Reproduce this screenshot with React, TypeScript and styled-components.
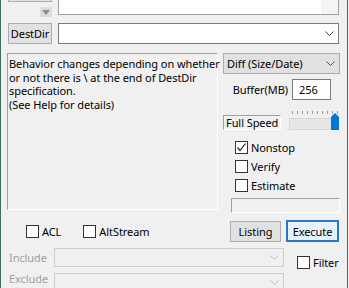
import React from "react";
import styled, { createGlobalStyle } from "styled-components";

const Global = createGlobalStyle`
    html, body {
        margin: 0;
        padding: 0;
        background: #f0f0f0;
    }
    body {
        font-family: "Noto Sans", "Open Sans", sans-serif;
        font-size: 11px;
        letter-spacing: -0.07px;
        color: #000;
    }
`;

const Window = styled.div`
    width: 348px;
    height: 288px;
    overflow: hidden;
    box-sizing: border-box;
    border-left: 1px solid #3f6f62;
    border-right: 1px solid #3f6f62;
    background: #f0f0f0;
    padding: 0 8px 0 7px;
    white-space: nowrap;
`;

const Content = styled.div`
    margin-top: -20px;
    display: flex;
    flex-direction: column;
`;

const Row = styled.div<{ $top?: number }>`
    display: flex;
    gap: 6px;
    margin-top: ${(p) => p.$top ?? 0}px;
`;

const LeftStack = styled.div`
    width: 44px;
    display: flex;
    flex-direction: column;
    align-items: flex-end;
    gap: 5px;
`;

const PushButton = styled.div<{ $w?: number; $h?: number; $default?: boolean }>`
    box-sizing: border-box;
    width: ${(p) => (p.$w ? `${p.$w}px` : "100%")};
    height: ${(p) => p.$h ?? 21}px;
    background: ${(p) => (p.$default ? "#e5f1fb" : "#e1e1e1")};
    border: ${(p) => (p.$default ? "2px solid #2a78c4" : "1px solid #adadad")};
    display: flex;
    align-items: center;
    justify-content: center;
    line-height: 1;
`;

const ArrowButton = styled.div`
    width: 12px;
    height: 10px;
    background: #dcdcdc;
    display: flex;
    align-items: center;
    justify-content: center;
`;

const Field = styled.div<{ $h: number; $disabled?: boolean; $light?: boolean }>`
    box-sizing: border-box;
    flex: 1;
    height: ${(p) => p.$h}px;
    background: ${(p) => (p.$disabled ? "#f0f0f0" : "#fff")};
    border: 1px solid ${(p) => (p.$disabled ? "#cccccc" : p.$light ? "#a0a0a0" : "#7a7a7a")};
    display: flex;
    justify-content: flex-end;
    align-items: center;
`;

const DropArea = styled.div<{ $shade?: boolean }>`
    width: 17px;
    height: 100%;
    background: ${(p) => (p.$shade ? "#f4f4f4" : "transparent")};
    display: flex;
    align-items: center;
    justify-content: center;
`;

const MainRow = styled.div`
    display: grid;
    grid-template-columns: 210px 117px;
    column-gap: 5px;
    margin-top: 9px;
    align-items: start;
`;

const Sunken = styled.div<{ $h: number }>`
    box-sizing: border-box;
    height: ${(p) => p.$h}px;
    border-top: 1px solid #a0a0a0;
    border-left: 1px solid #a0a0a0;
    border-right: 1px solid #ffffff;
    border-bottom: 1px solid #ffffff;
`;

const InfoBox = styled(Sunken)`
    margin-left: -1px;
    padding: 3px 0 0 1px;
    line-height: 13.5px;
`;

const RightCol = styled.div`
    display: flex;
    flex-direction: column;
`;

const DropList = styled.div`
    box-sizing: border-box;
    height: 21px;
    background: #e1e1e1;
    border: 1px solid #adadad;
    display: flex;
    align-items: center;
    justify-content: space-between;
    padding-left: 3px;
`;

const BufferRow = styled.div`
    display: flex;
    justify-content: flex-end;
    align-items: center;
    gap: 4px;
    padding-right: 9px;
    margin-top: 5px;
    height: 21px;
`;

const NumInput = styled.div`
    box-sizing: border-box;
    width: 39px;
    height: 21px;
    background: #fff;
    border: 1px solid #7a7a7a;
    display: flex;
    align-items: center;
    padding-left: 6px;
`;

const SpeedRow = styled.div`
    display: flex;
    align-items: flex-end;
    margin-top: 10px;
    height: 20px;
`;

const SpeedBox = styled(Sunken)`
    width: 58px;
    display: flex;
    align-items: center;
    padding-left: 2px;
    line-height: 1;
`;

const Slider = styled.svg`
    margin-left: 8px;
    display: block;
`;

const Checks = styled.div`
    display: flex;
    flex-direction: column;
    padding-left: 12px;
    margin-top: 11px;
`;

const CheckRow = styled.label`
    display: flex;
    gap: 3px;
    height: 19px;
    align-items: flex-start;
    line-height: 13px;
`;

const Box = styled.span`
    box-sizing: border-box;
    flex: none;
    width: 13px;
    height: 13px;
    border: 1px solid #333;
    background: #fff;
    display: flex;
    align-items: center;
    justify-content: center;
`;

const StatusBox = styled(Sunken)`
    margin-left: 8px;
`;

const ActionRow = styled.div`
    display: flex;
    align-items: center;
    margin-top: 7px;
    height: 22px;
    padding-left: 18px;
`;

const Options = styled.div`
    flex: 1;
    display: flex;
    gap: 22px;
    padding-top: 6px;
`;

const Buttons = styled.div`
    display: flex;
    gap: 5px;
    align-items: center;
`;

const FilterGrid = styled.div`
    display: grid;
    grid-template-columns: 45px 230px auto;
    grid-template-rows: 19px 19px;
    row-gap: 6px;
    margin-top: 6px;
    padding-left: 1px;
`;

const DimLabel = styled.div<{ $dy: number }>`
    color: #a0a0a0;
    line-height: 13px;
    margin-top: ${(p) => p.$dy}px;
`;

const FilterCell = styled.div`
    grid-column: 3;
    grid-row: 1 / span 2;
    padding: 8px 0 0 13px;
`;

const Chevron = ({ color }: { color: string }) => (
    <svg width="9" height="5" viewBox="0 0 9 5">
        <polyline points="0.5,0.5 4.5,4.5 8.5,0.5" fill="none" stroke={color} strokeWidth="1" />
    </svg>
);

const Check = ({ on, label }: { on?: boolean; label: string }) => (
    <CheckRow>
        <Box>
            {on && (
                <svg width="11" height="11" viewBox="0 0 11 11">
                    <polyline points="1.5,5.5 4,8.5 9.5,1.5" fill="none" stroke="#222" strokeWidth="1.2" />
                </svg>
            )}
        </Box>
        <span>{label}</span>
    </CheckRow>
);

const ticks = Array.from({ length: 10 }, (_, i) => 3 + i * 5);

const App: React.FC = () => {
    return (
        <Window>
            <Global />
            <Content>
                <Row>
                    <LeftStack>
                        <PushButton $h={22} />
                        <ArrowButton>
                            <svg width="8" height="5" viewBox="0 0 8 5">
                                <polygon points="0,0 8,0 4,5" fill="#8a8a8a" />
                            </svg>
                        </ArrowButton>
                    </LeftStack>
                    <Field $h={35} $light>
                        <DropArea $shade>
                            <Chevron color="#c4c4c4" />
                        </DropArea>
                    </Field>
                </Row>
                <Row $top={6}>
                    <PushButton $w={44}>DestDir</PushButton>
                    <Field $h={21}>
                        <DropArea>
                            <Chevron color="#444" />
                        </DropArea>
                    </Field>
                </Row>
                <MainRow>
                    <InfoBox $h={157}>
                        Behavior changes depending on whether
                        <br />
                        or not there is \ at the end of DestDir
                        <br />
                        specification.
                        <br />
                        (See Help for details)
                    </InfoBox>
                    <RightCol>
                        <DropList>
                            <span>Diff (Size/Date)</span>
                            <DropArea>
                                <Chevron color="#555" />
                            </DropArea>
                        </DropList>
                        <BufferRow>
                            <span>Buffer(MB)</span>
                            <NumInput>256</NumInput>
                        </BufferRow>
                        <SpeedRow>
                            <SpeedBox $h={15}>Full Speed</SpeedBox>
                            <Slider width="51" height="20" viewBox="0 0 51 20">
                                {ticks.map((x) => (
                                    <line key={x} x1={x + 0.5} y1="1" x2={x + 0.5} y2="4" stroke="#9a9a9a" />
                                ))}
                                <rect x="0.5" y="8.5" width="49" height="11" fill="#e6e6e6" stroke="#d6d6d6" />
                                <polygon points="42,7 46,3 50,7 50,20 42,20" fill="#0078d7" />
                            </Slider>
                        </SpeedRow>
                        <Checks>
                            <Check on label="Nonstop" />
                            <Check label="Verify" />
                            <Check label="Estimate" />
                        </Checks>
                        <StatusBox $h={15} />
                    </RightCol>
                </MainRow>
                <ActionRow>
                    <Options>
                        <Check label="ACL" />
                        <Check label="AltStream" />
                    </Options>
                    <Buttons>
                        <PushButton $w={51} $h={21}>Listing</PushButton>
                        <PushButton $w={53} $h={22} $default>Execute</PushButton>
                    </Buttons>
                </ActionRow>
                <FilterGrid>
                    <DimLabel $dy={3}>Include</DimLabel>
                    <Field $h={19} $disabled>
                        <DropArea>
                            <Chevron color="#bdbdbd" />
                        </DropArea>
                    </Field>
                    <FilterCell>
                        <Check label="Filter" />
                    </FilterCell>
                    <DimLabel $dy={-1}>Exclude</DimLabel>
                    <Field $h={19} $disabled>
                        <DropArea>
                            <Chevron color="#bdbdbd" />
                        </DropArea>
                    </Field>
                </FilterGrid>
            </Content>
        </Window>
    );
};

export default App;
